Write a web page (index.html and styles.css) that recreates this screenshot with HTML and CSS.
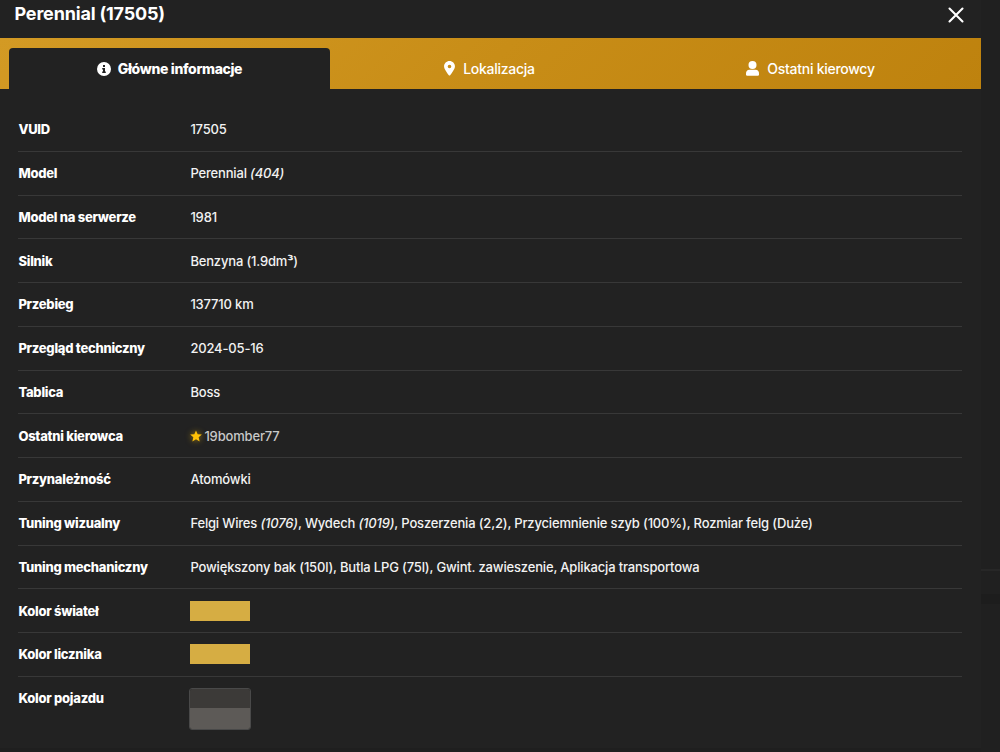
FILE: index.html
```html
<!DOCTYPE html>
<html lang="pl">
<head>
<meta charset="utf-8">
<title>Perennial (17505)</title>
<link rel="stylesheet" href="styles.css">
</head>
<body>
<div class="page">
<main class="modal">
  <header class="modal-head">
    <h1>Perennial (17505)</h1>
    <svg class="close" viewBox="0 0 16 16"><path d="M1.5 1.5l13 13M14.5 1.5l-13 13"/></svg>
  </header>
  <nav class="tabs">
    <div class="tab active">
      <svg class="icon info" viewBox="0 0 14 14"><circle cx="7" cy="7" r="7"/><path class="cut" d="M6 3h2v2H6zM5.2 6H8v3.5h.8V11H5.2V9.500H6V7.400h-.8z"/></svg>
      <span>Główne informacje</span>
    </div>
    <div class="tab">
      <svg class="icon pin" viewBox="0 0 384 512"><path d="M215.700 499.200C267 435 384 279.400 384 192 384 86 298 0 192 0S0 86 0 192c0 87.400 117 243 168.300 307.200 12.300 15.300 35.100 15.300 47.400 0zM192 128a64 64 0 1 1 0 128 64 64 0 1 1 0-128z"/></svg>
      <span>Lokalizacja</span>
    </div>
    <div class="tab">
      <svg class="icon user" viewBox="0 0 13 15"><circle cx="6.500" cy="4" r="4"/><path d="M3.500 8.700h6C12 8.700 13 10.500 13 12.500v1c0 .8-.5 1.200-1.200 1.200H1.200C.5 14.700 0 14.300 0 13.500v-1c0-2 1-3.800 3.500-3.800z"/></svg>
      <span>Ostatni kierowcy</span>
    </div>
  </nav>
  <dl class="details">
    <div class="row"><dt>VUID</dt><dd>17505</dd></div>
    <div class="row"><dt>Model</dt><dd>Perennial <em>(404)</em></dd></div>
    <div class="row"><dt>Model na serwerze</dt><dd>1981</dd></div>
    <div class="row"><dt>Silnik</dt><dd>Benzyna (1.9dm<span class="cubic">³</span>)</dd></div>
    <div class="row"><dt>Przebieg</dt><dd>137710 km</dd></div>
    <div class="row"><dt>Przegląd techniczny</dt><dd>2024-05-16</dd></div>
    <div class="row"><dt>Tablica</dt><dd>Boss</dd></div>
    <div class="row"><dt>Ostatni kierowca</dt><dd class="driver"><svg class="star" viewBox="0 0 24 24"><path d="M12 .8l3.300 7.700 8.400.7-6.400 5.500 2 8.200L12 18.500l-7.300 4.400 2-8.200L.3 9.200l8.400-.7z"/></svg><span>19bomber77</span></dd></div>
    <div class="row"><dt>Przynależność</dt><dd>Atomówki</dd></div>
    <div class="row"><dt>Tuning wizualny</dt><dd>Felgi Wires <em>(1076)</em>, Wydech <em>(1019)</em>, Poszerzenia (2,2), Przyciemnienie szyb (100%), Rozmiar felg (Duże)</dd></div>
    <div class="row"><dt>Tuning mechaniczny</dt><dd>Powiększony bak (150l), Butla LPG (75l), Gwint. zawieszenie, Aplikacja transportowa</dd></div>
    <div class="row"><dt>Kolor świateł</dt><dd><div class="swatch"></div></dd></div>
    <div class="row"><dt>Kolor licznika</dt><dd><div class="swatch"></div></dd></div>
    <div class="row vehicle"><dt>Kolor pojazdu</dt><dd><div class="paint"><div class="primary"></div><div class="secondary"></div></div></dd></div>
  </dl>
</main>
<aside class="backdrop"><div class="backdrop-top"></div><div class="backdrop-line"></div><div class="backdrop-mid"></div><div class="backdrop-gap"></div></aside>
</div>
</body>
</html>
```
FILE: styles.css
```css
* { box-sizing: border-box; }
body {
  margin: 0;
  background: #222;
  color: #fff;
  font-family: Inter, "Noto Sans", sans-serif;
  font-size: 13px;
  overflow: hidden;
}
.page { display: flex; height: 752px; }
.modal { width: 981px; border-bottom: 4px solid #1f1f1f; }
.modal-head {
  display: flex;
  justify-content: space-between;
  height: 38px;
  padding-left: 14.500px;
}
h1 {
  margin: 3px 0 0;
  font-size: 18px;
  line-height: 22px;
  font-weight: 700;
  letter-spacing: -0.18px;
}
.close {
  width: 16px;
  height: 16px;
  margin: 7px 17px 0 0;
  fill: none;
  stroke: #fff;
  stroke-width: 2.1;
  stroke-linecap: round;
}
.tabs {
  display: grid;
  grid-template-columns: repeat(3, 1fr);
  height: 51px;
  padding: 10px 9px 0;
  background: linear-gradient(135deg, #d39a24, #c88d17 50%, #be820e);
}
.tab {
  display: flex;
  align-items: center;
  justify-content: center;
  padding-right: 2px;
  font-size: 14px;
  font-weight: 500;
  letter-spacing: -0.27px;
}
.tab.active {
  padding-right: 0;
  background: #222;
  border-radius: 4px 4px 0 0;
  font-weight: 800;
  letter-spacing: -0.35px;
}
.icon { fill: #fff; }
.info { width: 14px; height: 14px; margin-right: 7px; }
.cut { fill: #222; }
.pin { width: 11px; height: 14.5px; margin-right: 8px; }
.user { width: 13px; height: 15px; margin-right: 8px; }
.details { margin: 0; padding: 19px 19px 0 18.400px; }
.row {
  display: grid;
  grid-template-columns: 172px 1fr;
  align-items: center;
  height: 43.750px;
  border-bottom: 1px solid #383838;
  line-height: 18px;
}
dt { font-weight: 800; letter-spacing: -0.26px; }
dd { margin: 0; color: #f2f2f2; font-weight: 500; letter-spacing: -0.17px; }
.cubic { font-weight: 800; }
.driver { display: flex; align-items: center; color: #c8c8c8; }
.star {
  width: 12px;
  height: 12px;
  margin-right: 2px;
  fill: #ffc107;
  filter: drop-shadow(0 0 3px rgba(255, 193, 7, .6));
}
.swatch { width: 59.500px; height: 20px; background: #d6ad43; }
.vehicle { height: 64px; align-items: start; padding-top: 12px; border: 0; }
.paint {
  width: 61.500px;
  height: 42px;
  margin: -1px 0 0 -1px;
  border: 1px solid #494949;
  border-radius: 3px;
  overflow: hidden;
}
.primary { height: 19px; background: #3c3a38; }
.secondary { height: 21px; background: #5d5a57; }
.backdrop { flex: 1; display: flex; flex-direction: column; background: #202020; }
.backdrop-top { height: 569px; }
.backdrop-line { height: 2px; background: #272727; }
.backdrop-mid { height: 23px; }
.backdrop-gap { height: 10px; background: #1d1d1d; }
```
